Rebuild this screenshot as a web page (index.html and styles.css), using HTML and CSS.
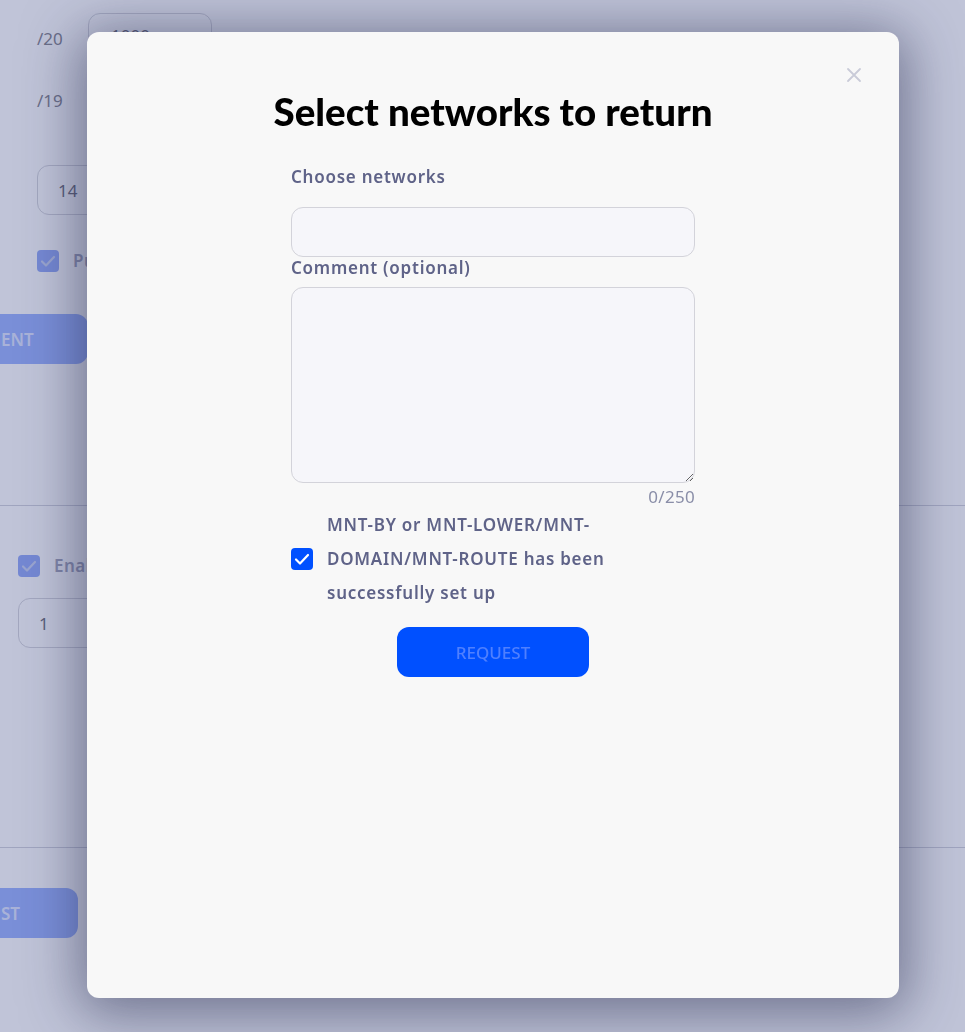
FILE: index.html
```html
<!DOCTYPE html>
<html lang="en">
<head>
    <meta charset="UTF-8">
    <meta name="viewport" content="width=device-width, initial-scale=1.0">
    <title>Networks - Return</title>
    <link rel="stylesheet" href="styles.css">
</head>
<body>

    <!-- Page behind the modal -->
    <div class="page">
        <div class="range-row">
            <span class="range-label">/20</span>
            <div class="field small">1000</div>
        </div>
        <div class="range-row second">
            <span class="range-label">/19</span>
        </div>

        <div class="field wide">14</div>

        <div class="check-line">
            <span class="box faded">
                <svg viewBox="0 0 22 22" width="22" height="22"><path d="M5 11.5l4 4 8-8.5" fill="none" stroke="#c9d3f2" stroke-width="2.2" stroke-linecap="round" stroke-linejoin="round"/></svg>
            </span>
            <span class="check-text">Public</span>
        </div>

        <button class="page-btn first">ENT</button>

        <div class="divider"></div>

        <div class="section">
            <div class="check-line">
                <span class="box faded">
                    <svg viewBox="0 0 22 22" width="22" height="22"><path d="M5 11.5l4 4 8-8.5" fill="none" stroke="#c9d3f2" stroke-width="2.2" stroke-linecap="round" stroke-linejoin="round"/></svg>
                </span>
                <span class="check-text">Enable</span>
            </div>
            <div class="field wide">1</div>
        </div>

        <div class="divider second"></div>

        <button class="page-btn last">ST</button>
    </div>

    <!-- Return networks modal -->
    <div class="overlay">
        <div class="modal">
            <span class="close">
                <svg viewBox="0 0 16 16" width="16" height="16"><path d="M2 2l12 12M14 2L2 14" stroke="#c9cbd8" stroke-width="1.8" stroke-linecap="round"/></svg>
            </span>
            <h1>Select networks to return</h1>

            <form class="form">
                <label class="label first">Choose networks</label>
                <div class="select"></div>

                <label class="label">Comment (optional)</label>
                <textarea class="comment"></textarea>
                <div class="counter">0/250</div>

                <div class="agree">
                    <span class="box">
                        <svg viewBox="0 0 22 22" width="22" height="22"><path d="M5 11.5l4 4 8-8.5" fill="none" stroke="#ffffff" stroke-width="2.2" stroke-linecap="round" stroke-linejoin="round"/></svg>
                    </span>
                    <span class="agree-text">MNT-BY or MNT-LOWER/MNT-DOMAIN/MNT-ROUTE has been successfully set up</span>
                </div>

                <div class="actions">
                    <button type="button" class="request">REQUEST</button>
                </div>
            </form>
        </div>
    </div>

</body>
</html>
```

FILE: styles.css
```css
/* Page */
body {
    margin: 0;
    background: #ffffff;
    font-family: 'Noto Sans', 'Open Sans', sans-serif;
    height: 100vh;
    overflow: hidden;
}

.page {
    padding: 13px 0 0 0;
    color: #84848d;
    font-size: 17px;
}

.range-row {
    display: flex;
    align-items: center;
    height: 50px;
    padding-left: 37px;
    gap: 26px;
}

.range-row.second {
    margin-top: 12px;
}

.range-label {
    width: 25px;
}

.field {
    box-sizing: border-box;
    height: 50px;
    border: 1px solid #d6d6dc;
    border-radius: 12px;
    padding: 0 20px;
    display: flex;
    align-items: center;
    color: #6e6e78;
}

.field.small {
    width: 124px;
    align-items: flex-start;
    padding: 10px 20px 0 22px;
}

.field.wide {
    width: 300px;
    margin: 40px 0 0 37px;
}

.check-line {
    display: flex;
    align-items: center;
    gap: 14px;
    margin: 34px 0 0 37px;
    font-weight: 600;
}

.box {
    width: 22px;
    height: 22px;
    border-radius: 4px;
    background: #0050ff;
    display: flex;
    flex-shrink: 0;
}

.box.faded {
    background: #94aaf8;
}

.check-text {
    color: #a4a6bb;
    letter-spacing: 0.5px;
}

.page-btn {
    display: block;
    height: 50px;
    border: none;
    border-radius: 12px;
    background: #9bb3ff;
    color: #dfe6ff;
    font-family: 'Noto Sans', sans-serif;
    font-size: 17px;
    font-weight: 600;
    text-align: left;
    padding: 0 0 0 21px;
    white-space: nowrap;
}

.page-btn.first {
    width: 108px;
    margin: 42px 0 0 -20px;
}

.page-btn.last {
    width: 98px;
    margin: 40px 0 0 -20px;
}

.divider {
    height: 1px;
    background: #d2d3dc;
    margin-top: 141px;
}

.divider.second {
    margin-top: 199px;
}

.section .check-line {
    margin: 48px 0 0 18px;
}

.section .field.wide {
    margin: 21px 0 0 18px;
    padding-left: 20px;
}

/* Overlay and modal */
.overlay {
    position: fixed;
    inset: 0;
    background: rgba(45, 58, 125, 0.3);
    padding: 32px 66px 34px 87px;
    box-sizing: border-box;
}

.modal {
    position: relative;
    height: 100%;
    background: #f8f8f8;
    border-radius: 12px;
    box-shadow: 0 8px 55px 8px rgba(30, 34, 70, 0.5);
    padding-top: 53px;
    box-sizing: border-box;
}

.close {
    position: absolute;
    top: 35px;
    right: 37px;
    display: flex;
}

h1 {
    margin: 0;
    text-align: center;
    font-family: 'Lato', sans-serif;
    font-weight: 900;
    font-size: 38.5px;
    line-height: 52px;
    color: #000000;
}

.form {
    width: 404px;
    margin: 0 auto;
}

.label {
    display: block;
    font-size: 17px;
    font-weight: 600;
    line-height: 22px;
    color: #5f6388;
    letter-spacing: 0.75px;
}

.label.first {
    margin-top: 29px;
}

.select {
    box-sizing: border-box;
    height: 50px;
    margin-top: 19px;
    border: 1px solid #d3d3da;
    border-radius: 12px;
    background: #f6f6fa;
}

.comment {
    display: block;
    box-sizing: border-box;
    width: 100%;
    height: 196px;
    margin: 8px 0 0 0;
    border: 1px solid #d3d3da;
    border-radius: 12px;
    background: #f6f6fa;
    resize: vertical;
    font-family: inherit;
}

.counter {
    text-align: right;
    font-size: 17px;
    line-height: 22px;
    margin-top: 3px;
    color: #8a8ea8;
    letter-spacing: 0.3px;
}

.agree {
    display: flex;
    align-items: center;
    gap: 14px;
}

.agree-text {
    font-size: 17px;
    font-weight: 600;
    line-height: 34px;
    color: #5f6388;
    letter-spacing: 0.75px;
}

.actions {
    display: flex;
    justify-content: center;
    margin-top: 17px;
}

.request {
    width: 192px;
    height: 50px;
    border: none;
    border-radius: 12px;
    background: #0050ff;
    color: #4f80ff;
    font-family: 'Noto Sans', sans-serif;
    font-size: 17px;
    font-weight: 500;
}
```
